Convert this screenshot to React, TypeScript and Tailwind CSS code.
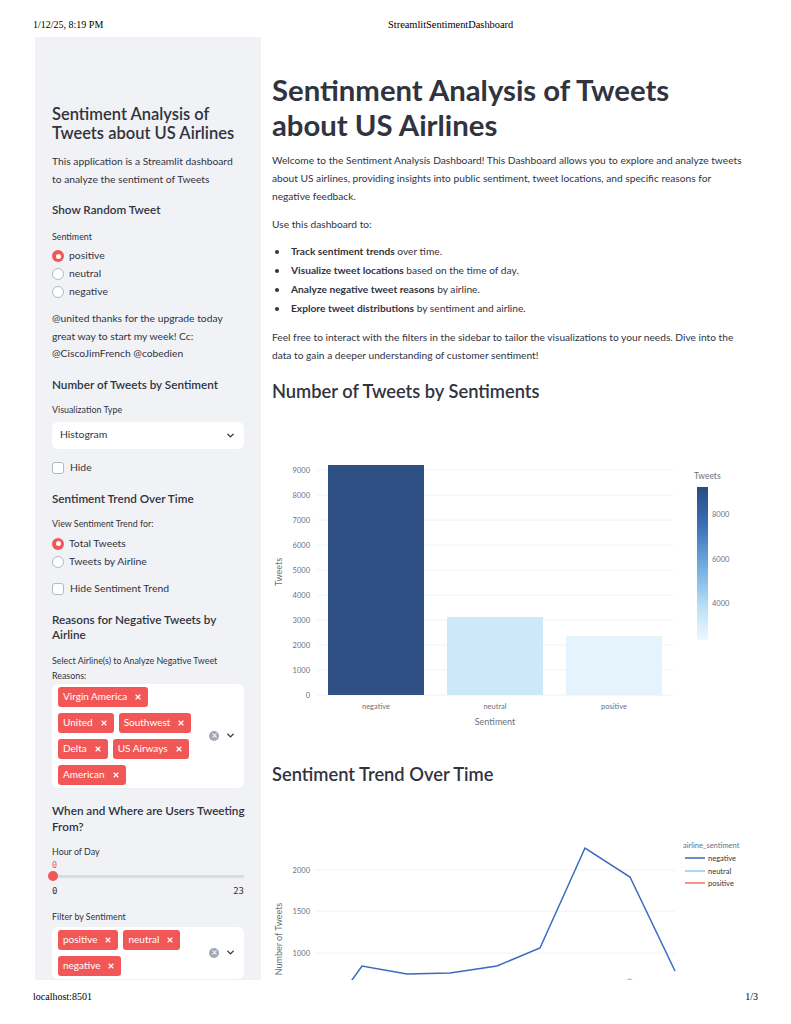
import { ChevronDown, X } from "lucide-react";

const RED = "bg-[#f25757]";

function Radio({ label, on }: { label: string; on?: boolean }) {
  return (
    <div className="flex h-[18px] items-center gap-[5px]">
      {on ? (
        <span className={`flex size-[12px] items-center justify-center rounded-full ${RED}`}>
          <span className="size-[5px] rounded-full bg-white" />
        </span>
      ) : (
        <span className="size-[12px] rounded-full border border-[#b4b8c0] bg-white" />
      )}
      <span className="text-[10.4px]">{label}</span>
    </div>
  );
}

function Check({ label }: { label: string }) {
  return (
    <div className="flex h-[16px] items-center gap-[6px]">
      <span className="size-[12px] rounded-[3px] border border-[#b4b8c0] bg-white" />
      <span className="text-[10.4px]">{label}</span>
    </div>
  );
}

function Tag({ label }: { label: string }) {
  return (
    <span className={`flex h-[20px] items-center gap-[7px] rounded-[3px] pl-[5px] pr-[6px] text-[10px] text-white ${RED}`}>
      {label}
      <X size={8} strokeWidth={3.5} />
    </span>
  );
}

function MultiSelect({ tags }: { tags: string[] }) {
  return (
    <div className="flex items-center rounded-[6px] bg-white py-[3px] pl-[6px]">
      <div className="flex w-[143px] flex-wrap gap-x-[5px] gap-y-[6px]">
        {tags.map((t) => (
          <Tag key={t} label={t} />
        ))}
      </div>
      <div className="ml-auto flex items-center gap-[6px] pr-[8px]">
        <span className="flex size-[10px] items-center justify-center rounded-full bg-[#a3a8b4]">
          <X size={7} strokeWidth={3.5} className="text-white" />
        </span>
        <ChevronDown size={11} strokeWidth={3} />
      </div>
    </div>
  );
}

function SideTitle({ children, className = "" }: { children: React.ReactNode; className?: string }) {
  return <div className={`whitespace-nowrap text-[11.7px] font-semibold ${className}`}>{children}</div>;
}

function Label({ children, className = "" }: { children: React.ReactNode; className?: string }) {
  return <div className={`text-[8.9px] leading-[14px] ${className}`}>{children}</div>;
}

function Sidebar() {
  return (
    <aside className="w-[226px] shrink-0 bg-[#f0f2f6] px-[17px] pt-[68px]">
      <div className="text-[16.5px] font-semibold leading-[19px]">
        Sentiment Analysis of
        <br />
        Tweets about US Airlines
      </div>
      <p className="mt-[9px] text-[10.3px] leading-[18px]">
        This application is a Streamlit dashboard to analyze the sentiment of Tweets
      </p>
      <SideTitle className="mt-[12px] leading-[18px]">Show Random Tweet</SideTitle>
      <Label className="mt-[12px]">Sentiment</Label>
      <div className="mt-[3px]">
        <Radio label="positive" on />
        <Radio label="neutral" />
        <Radio label="negative" />
      </div>
      <p className="mt-[9px] text-[10.3px] leading-[17.5px]">
        @united thanks for the upgrade today great way to start my week! Cc: @CiscoJimFrench @cobedien
      </p>
      <SideTitle className="mt-[12px] leading-[18px]">Number of Tweets by Sentiment</SideTitle>
      <Label className="mt-[10px]">Visualization Type</Label>
      <div className="mt-[5px] flex h-[27px] items-center rounded-[6px] bg-white px-[8px] text-[10.4px]">
        Histogram
        <ChevronDown size={11} strokeWidth={3} className="ml-auto" />
      </div>
      <div className="mt-[11px]">
        <Check label="Hide" />
      </div>
      <SideTitle className="mt-[13px] leading-[18px]">Sentiment Trend Over Time</SideTitle>
      <Label className="mt-[10px]">View Sentiment Trend for:</Label>
      <div className="mt-[4px]">
        <Radio label="Total Tweets" on />
        <Radio label="Tweets by Airline" />
      </div>
      <div className="mt-[10px]">
        <Check label="Hide Sentiment Trend" />
      </div>
      <SideTitle className="mt-[15px] leading-[15px]">
        Reasons for Negative Tweets by
        <br />
        Airline
      </SideTitle>
      <Label className="mt-[11px] leading-[15px]">
        Select Airline(s) to Analyze Negative Tweet
        <br />
        Reasons:
      </Label>
      <div className="mt-[1px]">
        <MultiSelect tags={["Virgin America", "United", "Southwest", "Delta", "US Airways", "American"]} />
      </div>
      <SideTitle className="mt-[14px] leading-[16px]">
        When and Where are Users Tweeting
        <br />
        From?
      </SideTitle>
      <Label className="mt-[11px]">Hour of Day</Label>
      <div className="relative h-[38px] pt-[1px]">
        <div className="text-[8.5px] leading-[10px] text-[#f25757] [font-family:'DejaVu_Sans_Mono',monospace]">0</div>
        <div className="relative mt-[5px] h-[3px] rounded-full bg-[#d9dce3]">
          <span className={`absolute -left-[4px] -top-[3.5px] size-[10px] rounded-full ${RED}`} />
        </div>
        <div className="mt-[8px] flex justify-between text-[9px] leading-[10px] [font-family:'DejaVu_Sans_Mono',monospace]">
          <span>0</span>
          <span>23</span>
        </div>
      </div>
      <Label className="mt-[13px]">Filter by Sentiment</Label>
      <div className="mt-[3px]">
        <MultiSelect tags={["positive", "neutral", "negative"]} />
      </div>
    </aside>
  );
}

const tick = "fill-[#6b7080] text-[7.5px]";

function BarChart() {
  const grid = [0, 1, 2, 3, 4, 5, 6, 7, 8, 9];
  const bars = [
    { x: 56, top: 35, c: "#2f5085", label: "negative" },
    { x: 175, top: 187, c: "#cde8f9", label: "neutral" },
    { x: 294, top: 206, c: "#e5f3fc", label: "positive" },
  ];
  return (
    <svg width="493" height="310" className="mt-[27px] block">
      <defs>
        <linearGradient id="cb" x1="0" y1="0" x2="0" y2="1">
          <stop offset="0" stopColor="#2a4a82" />
          <stop offset="0.25" stopColor="#3a70b8" />
          <stop offset="0.55" stopColor="#78b3e3" />
          <stop offset="0.8" stopColor="#bfe2f8" />
          <stop offset="1" stopColor="#eef7fe" />
        </linearGradient>
      </defs>
      {grid.map((k) => (
        <g key={k}>
          <line x1="45" x2="401" y1={265 - 25 * k} y2={265 - 25 * k} stroke="#f1f2f4" strokeWidth="1" />
          <text x="38" y={268 - 25 * k} textAnchor="end" className={tick}>
            {k * 1000}
          </text>
        </g>
      ))}
      {bars.map((b) => (
        <g key={b.label}>
          <rect x={b.x} y={b.top} width="96" height={265 - b.top} fill={b.c} />
          <text x={b.x + 48} y="279" textAnchor="middle" className={tick}>
            {b.label}
          </text>
        </g>
      ))}
      <text x="223" y="295" textAnchor="middle" className="fill-[#6b7080] text-[9px]">
        Sentiment
      </text>
      <text transform="translate(10 142) rotate(-90)" textAnchor="middle" className="fill-[#6b7080] text-[9px]">
        Tweets
      </text>
      <text x="422" y="49" className="fill-[#6b7080] text-[8.5px]">
        Tweets
      </text>
      <rect x="425" y="57" width="11" height="153" fill="url(#cb)" />
      <text x="440" y="87" className={tick}>8000</text>
      <text x="440" y="132" className={tick}>6000</text>
      <text x="440" y="176" className={tick}>4000</text>
    </svg>
  );
}

function LineChart() {
  const neg = "45,225 90,162 135,170 178,169 225,162 268,144 313,44 358,73 403,167";
  const neu = "268,215 313,195 358,175 403,205";
  return (
    <svg width="493" height="200" className="mt-[18px] block">
      {[66, 107, 149].map((y, i) => (
        <g key={y}>
          <line x1="43" x2="403" y1={y} y2={y} stroke="#f1f2f4" />
          <text x="38" y={y + 3} textAnchor="end" className={tick}>
            {["2000", "1500", "1000"][i]}
          </text>
        </g>
      ))}
      <text transform="translate(10 135) rotate(-90)" textAnchor="middle" className="fill-[#6b7080] text-[9px]">
        Number of Tweets
      </text>
      <polyline points={neu} fill="none" stroke="#8fc8f3" strokeWidth="1.5" />
      <polyline points={neg} fill="none" stroke="#3a69bf" strokeWidth="1.5" />
      <text x="411" y="44" className="fill-[#6b7080] text-[7.5px]">airline_sentiment</text>
      {[
        { y: 54, c: "#3a69bf", l: "negative" },
        { y: 67, c: "#8fc8f3", l: "neutral" },
        { y: 79, c: "#f3715a", l: "positive" },
      ].map((r) => (
        <g key={r.l}>
          <line x1="413" x2="433" y1={r.y} y2={r.y} stroke={r.c} strokeWidth="1.5" />
          <text x="436" y={r.y + 3} className="fill-[#31333f] text-[7.5px]">
            {r.l}
          </text>
        </g>
      ))}
    </svg>
  );
}

function Main() {
  return (
    <main className="ml-[11px] w-[493px] shrink-0">
      <h1 className="mt-[35px] text-[29.3px] font-bold leading-[35px]">
        Sentinment Analysis of Tweets
        <br />
        about US Airlines
      </h1>
      <div className="max-w-[475px] text-[10.2px]">
        <p className="mt-[9px] leading-[18px]">
          Welcome to the Sentiment Analysis Dashboard! This Dashboard allows you to explore and analyze tweets about US
          airlines, providing insights into public sentiment, tweet locations, and specific reasons for negative
          feedback.
        </p>
        <p className="mt-[10px] leading-[18px]">Use this dashboard to:</p>
        <ul className="mt-[9px] leading-[19px]">
          {[
            ["Track sentiment trends", " over time."],
            ["Visualize tweet locations", " based on the time of day."],
            ["Analyze negative tweet reasons", " by airline."],
            ["Explore tweet distributions", " by sentiment and airline."],
          ].map(([b, r]) => (
            <li key={b} className="flex items-center">
              <span className="ml-[3px] mr-[12px] size-[4px] rounded-full bg-[#31333f]" />
              <span>
                <b className="font-bold">{b}</b>
                {r}
              </span>
            </li>
          ))}
        </ul>
        <p className="mt-[10px] leading-[18px]">
          Feel free to interact with the filters in the sidebar to tailor the visualizations to your needs. Dive into
          the data to gain a deeper understanding of customer sentiment!
        </p>
      </div>
      <h2 className="mt-[15px] text-[18.3px] font-semibold leading-[24px]">Number of Tweets by Sentiments</h2>
      <BarChart />
      <h2 className="mt-[22px] text-[18.3px] font-semibold leading-[24px]">Sentiment Trend Over Time</h2>
      <LineChart />
    </main>
  );
}

export default function App() {
  return (
    <div className="relative h-[1024px] w-[791px] overflow-hidden bg-white text-[#31333f] [font-family:Lato,sans-serif]">
      <div className="flex h-[37px] pl-[33px] pt-[18px] text-[10px] leading-[14px] text-black [font-family:'Liberation_Serif',serif]">
        <span className="w-[355px]">1/12/25, 8:19 PM</span>
        <span className="text-[10.4px]">StreamlitSentimentDashboard</span>
      </div>
      <div className="flex h-[943px] overflow-hidden pl-[35px]">
        <Sidebar />
        <Main />
      </div>
      <div className="flex justify-between px-[33px] pt-[10px] text-[10px] leading-[14px] text-black [font-family:'Liberation_Serif',serif]">
        <span>localhost:8501</span>
        <span>1/3</span>
      </div>
    </div>
  );
}
